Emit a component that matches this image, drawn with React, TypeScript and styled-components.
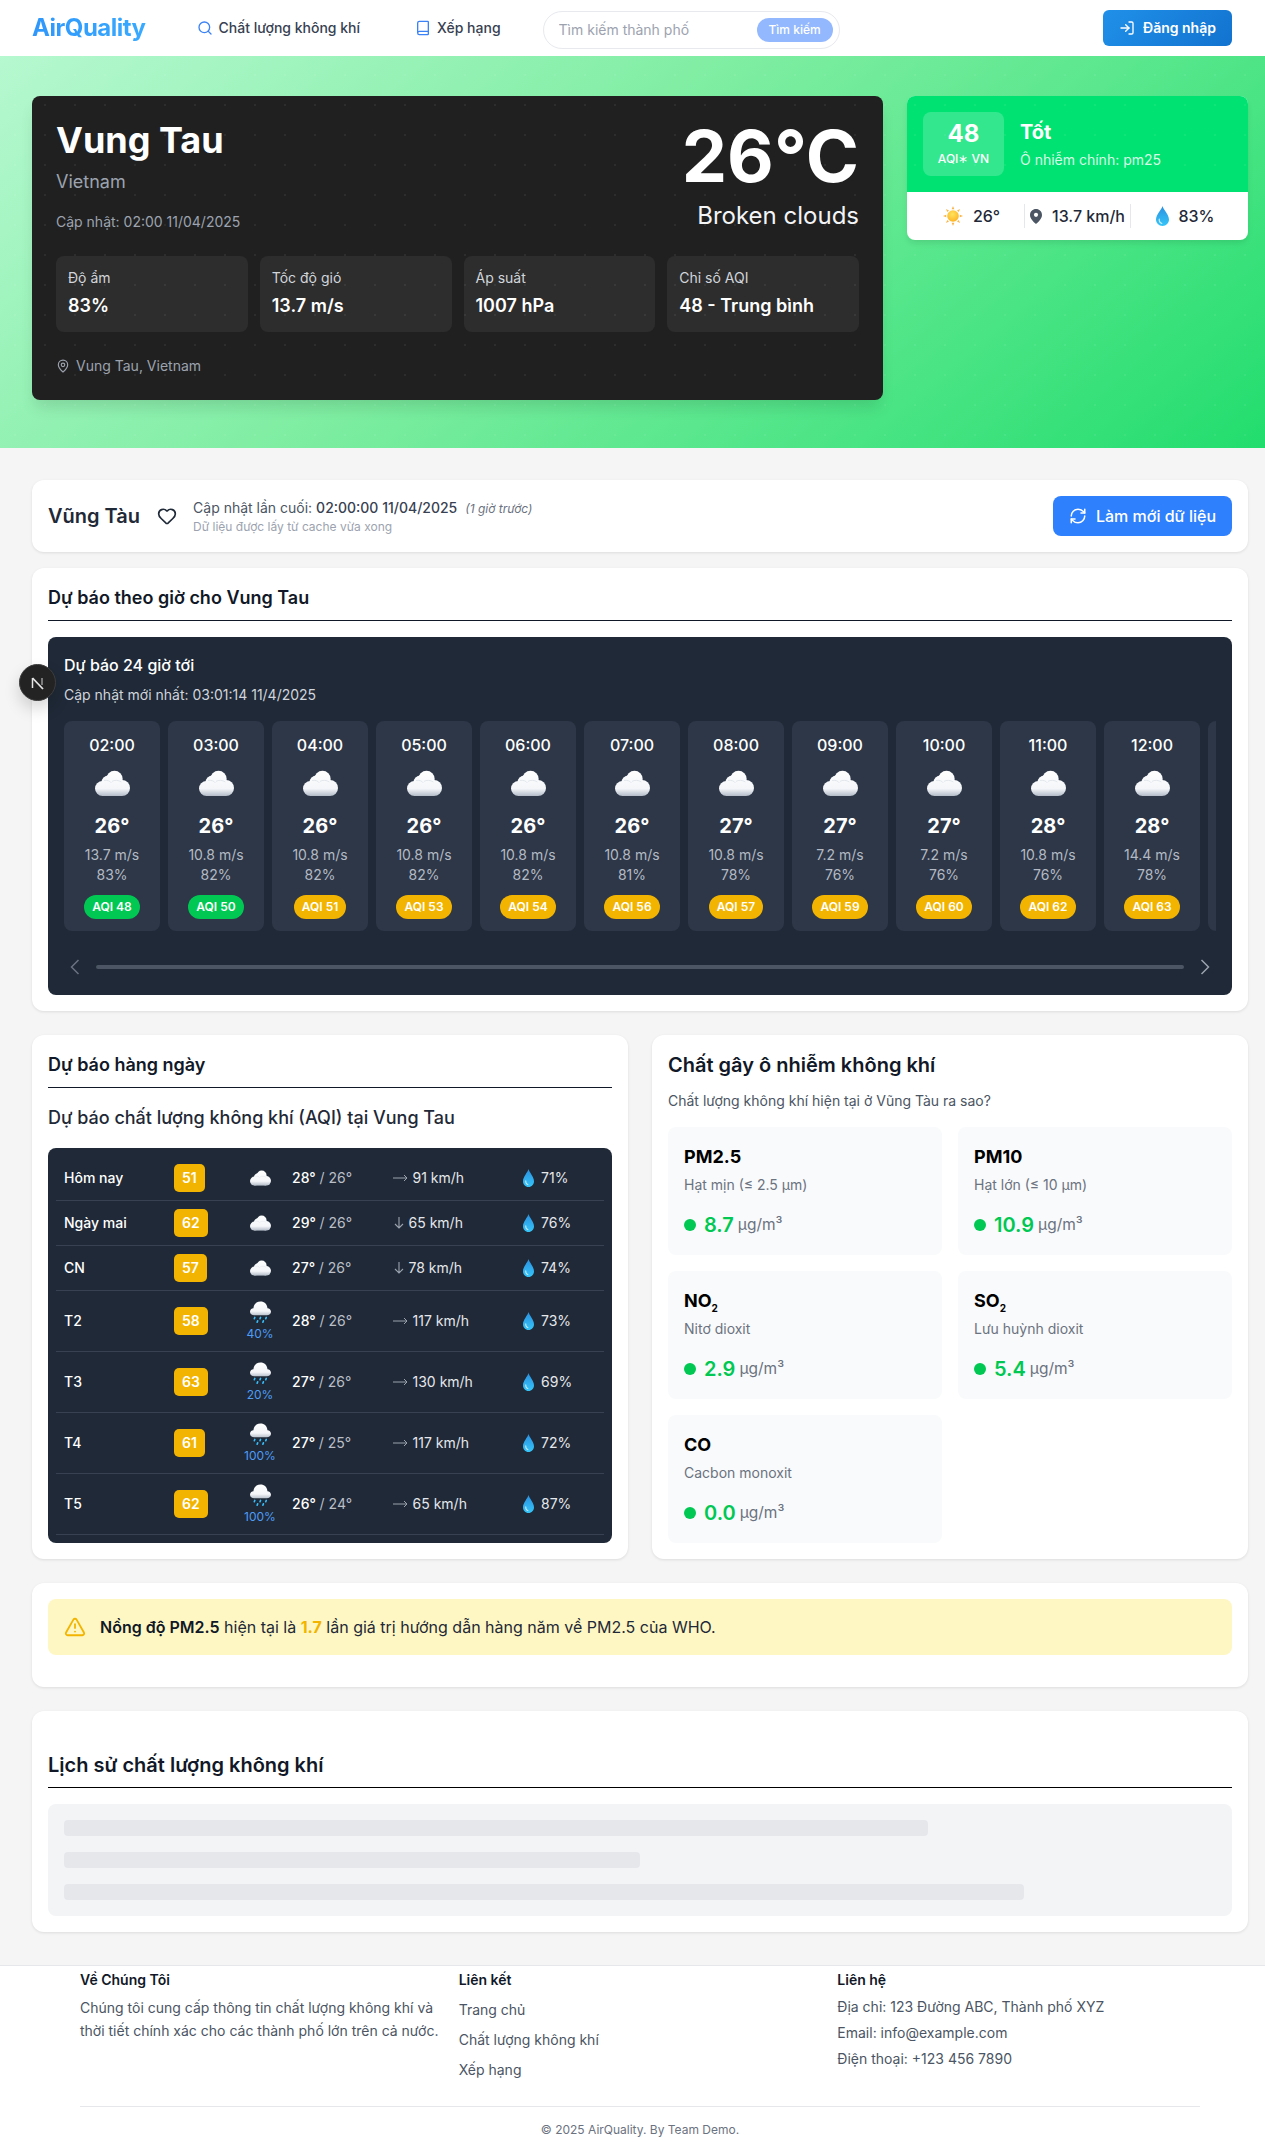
import React from "react";
import styled, { createGlobalStyle } from "styled-components";
import { Search, Book, LogIn, MapPin, Heart, RefreshCw, TriangleAlert } from "lucide-react";

const Global = createGlobalStyle`
  * { box-sizing: border-box; }
  html, body { margin: 0; padding: 0; background: #f5f5f5; }
  body { font-family: Inter, "Noto Sans", "Liberation Sans", sans-serif; color: #111827; }
  h1, h2, h3, h4, p, ul { margin: 0; padding: 0; }
`;

const Page = styled.div`
  width: 1265px;
  min-height: 2142px;
  background: #f5f5f5;
`;

/* Header */
const Header = styled.header`
  height: 56px;
  background: #fff;
  display: flex;
  align-items: center;
  padding: 0 33px 0 32px;
`;
const Logo = styled.div`
  font-size: 24px;
  font-weight: 700;
  line-height: 32px;
  letter-spacing: -0.5px;
  background: linear-gradient(90deg, #2f97fb, #38aaff);
  -webkit-background-clip: text;
  background-clip: text;
  color: transparent;
  margin-right: 51px;
`;
const NavItem = styled.a`
  display: flex;
  align-items: center;
  gap: 6px;
  font-size: 14px;
  font-weight: 500;
  line-height: 20px;
  color: #374151;
  margin-right: 55px;
  &:last-of-type { margin-right: 42px; }
  svg { color: #3b82f6; flex: none; }
`;
const SearchBox = styled.form`
  width: 297px;
  height: 38px;
  margin-top: 4px;
  border: 1.5px solid #e8e9ee;
  border-radius: 19px;
  display: flex;
  align-items: center;
  padding: 0 6px 0 15px;
`;
const SearchInput = styled.input`
  flex: 1;
  min-width: 0;
  border: 0;
  outline: 0;
  padding: 0;
  background: transparent;
  font: 400 14px/20px Inter, sans-serif;
  &::placeholder { color: #9ca3af; opacity: 1; }
`;
const SearchButton = styled.button`
  width: 76px;
  height: 24px;
  border: 0;
  border-radius: 12px;
  background: #93b8fd;
  color: #fff;
  font: 500 12px/16px Inter, sans-serif;
  padding: 0;
`;
const LoginButton = styled.button`
  margin-left: auto;
  width: 129px;
  height: 36px;
  border: 0;
  border-radius: 6px;
  background: linear-gradient(135deg, #2090e8, #1273cf);
  color: #fff;
  font: 600 14px/20px Inter, sans-serif;
  display: flex;
  align-items: center;
  justify-content: center;
  gap: 8px;
`;

/* Hero */
const Hero = styled.section`
  position: relative;
  height: 392px;
  padding: 40px 17px 48px 32px;
  display: grid;
  grid-template-columns: 851px 341px;
  column-gap: 24px;
  align-items: start;
  background: linear-gradient(140deg, #b6f8d0 0%, #7ceda0 45%, #22dd6e 100%);
  &::after {
    content: "";
    position: absolute;
    inset: 0;
    pointer-events: none;
    background-image: radial-gradient(circle, rgba(255, 255, 255, 0.06) 1px, transparent 1.2px);
    background-size: 30px 30px;
    background-position: 0 4px;
  }
`;
const WeatherCard = styled.div`
  height: 304px;
  background: #202020;
  border-radius: 8px;
  padding: 24px;
  color: #fff;
  box-shadow: 0 10px 15px -3px rgba(0, 0, 0, 0.12);
`;
const WeatherTop = styled.div`
  display: flex;
  justify-content: space-between;
`;
const City = styled.h1`
  font-size: 36px;
  line-height: 40px;
  font-weight: 700;
`;
const Country = styled.p`
  font-size: 18px;
  line-height: 28px;
  color: #9ca3af;
  margin-top: 8px;
`;
const Updated = styled.p`
  font-size: 14px;
  line-height: 20px;
  color: #9ca3af;
  margin-top: 16px;
`;
const TempBlock = styled.div`
  text-align: right;
`;
const Temp = styled.div`
  font-size: 72px;
  line-height: 72px;
  font-weight: 700;
`;
const Condition = styled.div`
  font-size: 24px;
  line-height: 32px;
  color: #f3f4f6;
  margin-top: 8px;
`;
const Stats = styled.div`
  display: grid;
  grid-template-columns: repeat(4, 1fr);
  gap: 12px;
  margin-top: 24px;
`;
const Stat = styled.div`
  height: 76px;
  background: #2d2d2d;
  border-radius: 8px;
  padding: 12px;
`;
const StatLabel = styled.div`
  font-size: 14px;
  line-height: 20px;
  color: #d1d5db;
`;
const StatValue = styled.div`
  font-size: 18px;
  line-height: 28px;
  font-weight: 600;
  margin-top: 4px;
`;
const Location = styled.div`
  display: flex;
  align-items: center;
  gap: 6px;
  font-size: 14px;
  line-height: 20px;
  color: #9ca3af;
  margin-top: 24px;
`;
const AqiCard = styled.div`
  border-radius: 8px;
  overflow: hidden;
  background: #fff;
  box-shadow: 0 4px 6px -1px rgba(0, 0, 0, 0.1);
`;
const AqiTop = styled.div`
  height: 96px;
  background: #00e272;
  padding: 16px;
  display: flex;
  gap: 16px;
  color: #fff;
`;
const AqiBadge = styled.div`
  width: 81px;
  height: 64px;
  border-radius: 8px;
  background: rgba(255, 255, 255, 0.2);
  text-align: center;
  padding-top: 7px;
`;
const AqiNumber = styled.div`
  font-size: 24px;
  line-height: 30px;
  font-weight: 700;
`;
const AqiScale = styled.div`
  font-size: 12px;
  line-height: 16px;
  font-weight: 500;
  margin-top: 2px;
`;
const AqiLevel = styled.div`
  font-size: 20px;
  line-height: 28px;
  font-weight: 700;
  margin-top: 6px;
`;
const AqiMain = styled.div`
  font-size: 14px;
  line-height: 20px;
  color: rgba(255, 255, 255, 0.85);
  margin-top: 4px;
`;
const AqiBottom = styled.div`
  height: 48px;
  display: grid;
  grid-template-columns: 117px 106px 118px;
  align-items: center;
`;
const AqiItem = styled.div<{ $offset?: string }>`
  height: 24px;
  display: flex;
  align-items: center;
  justify-content: center;
  gap: 10px;
  font-size: 16px;
  line-height: 24px;
  font-weight: 500;
  color: #1f2937;
  padding: ${(p) => p.$offset ?? "0"};
  & + & { border-left: 1px solid #e5e7eb; }
  white-space: nowrap;
`;

/* Main */
const Main = styled.main`
  padding: 32px 17px 33px 32px;
`;
const Card = styled.section<{ $mt?: number }>`
  background: #fff;
  border-radius: 12px;
  padding: 16px;
  margin-top: ${(p) => p.$mt ?? 0}px;
  box-shadow: 0 1px 3px rgba(0, 0, 0, 0.1);
`;
const StatusCard = styled(Card)`
  height: 72px;
  display: flex;
  align-items: center;
`;
const StatusCity = styled.h2`
  font-size: 20px;
  line-height: 28px;
  font-weight: 600;
  color: #1f2937;
  margin-right: 17px;
`;
const HeartIcon = styled(Heart)`
  color: #1f2937;
  margin-right: 16px;
  flex: none;
`;
const StatusLine = styled.div`
  font-size: 14px;
  line-height: 20px;
  color: #4b5563;
  strong { font-weight: 500; color: #374151; }
  em { font-size: 12px; color: #6b7280; margin-left: 8px; }
`;
const StatusNote = styled.div`
  font-size: 12px;
  line-height: 16px;
  color: #9ca3af;
`;
const RefreshButton = styled.button`
  margin-left: auto;
  width: 179px;
  height: 40px;
  border: 0;
  border-radius: 8px;
  background: #2f80fd;
  color: #fff;
  font: 500 16px/24px Inter, sans-serif;
  display: flex;
  align-items: center;
  justify-content: center;
  gap: 9px;
`;
const SectionTitle = styled.h2`
  font-size: 18px;
  line-height: 28px;
  font-weight: 600;
  color: #111827;
  padding-bottom: 8px;
  border-bottom: 1px solid #111827;
`;
const DarkPanel = styled.div`
  margin-top: 16px;
  background: #1f2937;
  border-radius: 8px;
  padding: 16px;
  color: #fff;
`;
const PanelTitle = styled.h3`
  font-size: 16px;
  line-height: 24px;
  font-weight: 500;
`;
const PanelSub = styled.p`
  font-size: 14px;
  line-height: 20px;
  color: #d1d5db;
  margin-top: 8px;
`;
const HourRow = styled.div`
  display: flex;
  gap: 8px;
  margin-top: 16px;
  overflow: hidden;
`;
const HourCard = styled.div`
  flex: none;
  width: 96px;
  height: 210px;
  background: #2d3748;
  border-radius: 8px;
  padding-top: 12px;
  display: flex;
  flex-direction: column;
  align-items: center;
`;
const HourTime = styled.div`
  font-size: 16px;
  line-height: 24px;
  font-weight: 500;
`;
const HourIcon = styled.div`
  height: 27px;
  margin-top: 13px;
`;
const HourTemp = styled.div`
  font-size: 20px;
  line-height: 28px;
  font-weight: 700;
  margin-top: 15px;
`;
const HourMeta = styled.div`
  font-size: 14px;
  line-height: 20px;
  color: #b4bac4;
`;
const HourWind = styled(HourMeta)`
  margin-top: 5px;
`;
const AqiPill = styled.div<{ $good: boolean }>`
  margin-top: 10px;
  height: 24px;
  padding: 4px 8px;
  border-radius: 12px;
  font-size: 12px;
  line-height: 16px;
  font-weight: 600;
  background: ${(p) => (p.$good ? "#00c853" : "#f2b400")};
  color: #fff;
`;
const ScrollRow = styled.div`
  display: flex;
  align-items: center;
  height: 24px;
  margin-top: 24px;
`;
const Track = styled.div`
  flex: 1;
  height: 4px;
  border-radius: 2px;
  background: #4b5563;
  margin: 0 16px;
`;
const Chevron = styled.svg<{ $side: "l" | "r" }>`
  width: 10px;
  height: 16px;
  flex: none;
  margin-left: ${(p) => (p.$side === "l" ? "6px" : "0")};
  margin-right: ${(p) => (p.$side === "r" ? "6px" : "0")};
`;
const Columns = styled.div`
  display: grid;
  grid-template-columns: 596px 596px;
  column-gap: 24px;
  margin-top: 24px;
`;
const SubTitle = styled.h3`
  font-size: 18px;
  line-height: 28px;
  font-weight: 500;
  color: #1f2937;
  margin-top: 16px;
`;
const DailyPanel = styled.div`
  margin-top: 16px;
  background: #1f2937;
  border-radius: 8px;
  padding: 8px;
  color: #fff;
`;
const DailyRow = styled.div<{ $rain: boolean }>`
  height: ${(p) => (p.$rain ? "61px" : "45px")};
  padding: 0 8px;
  border-bottom: 1px solid #374151;
  display: grid;
  grid-template-columns: 110px 60px 52px 106.5px 130.5px 1fr;
  align-items: center;
  font-size: 14px;
  line-height: 20px;
  font-weight: 500;
`;
const DayBadge = styled.span`
  display: inline-block;
  vertical-align: middle;
  padding: 4px 8px;
  height: 28px;
  line-height: 20px;
  border-radius: 5px;
  background: #f2b400;
  font-weight: 600;
  color: #fff;
`;
const WeatherCell = styled.div`
  display: flex;
  flex-direction: column;
  align-items: center;
`;
const RainPct = styled.span`
  font-size: 12px;
  line-height: 16px;
  font-weight: 400;
  color: #4f9cf5;
  margin-top: 3px;
`;
const TempCell = styled.div`
  padding-left: 6px;
  span { color: #b9bec7; font-weight: 400; }
`;
const WindCell = styled.div`
  display: flex;
  align-items: center;
  gap: 5px;
  color: #e5e7eb;
  font-weight: 400;
  white-space: nowrap;
`;
const HumidCell = styled.div`
  display: flex;
  align-items: center;
  gap: 7px;
  font-weight: 400;
  color: #e5e7eb;
`;
const PollTitle = styled.h2`
  font-size: 20px;
  line-height: 28px;
  font-weight: 600;
  color: #111827;
`;
const PollSub = styled.p`
  font-size: 14px;
  line-height: 20px;
  color: #4b5563;
  margin-top: 12px;
`;
const PollGrid = styled.div`
  display: grid;
  grid-template-columns: 1fr 1fr;
  gap: 16px;
  margin-top: 16px;
`;
const PollCard = styled.div`
  height: 128px;
  background: #f9fafb;
  border-radius: 8px;
  padding: 16px;
`;
const PollName = styled.div`
  font-size: 18px;
  line-height: 28px;
  font-weight: 700;
  color: #000;
  sub { font-size: 10px; line-height: 0; }
`;
const PollDesc = styled.div`
  font-size: 14px;
  line-height: 20px;
  color: #6b7280;
  margin-top: 4px;
`;
const PollValue = styled.div`
  display: flex;
  align-items: center;
  margin-top: 16px;
  height: 28px;
`;
const Dot = styled.span`
  width: 12px;
  height: 12px;
  border-radius: 50%;
  background: #00c853;
  margin-right: 8px;
`;
const PollNumber = styled.span`
  font-size: 20px;
  line-height: 28px;
  font-weight: 600;
  color: #00c853;
  margin-right: 4px;
`;
const PollUnit = styled.span`
  font-size: 15.5px;
  line-height: 20px;
  color: #6b7280;
`;
const Alert = styled.div`
  height: 56px;
  margin-bottom: 16px;
  background: #fef7c3;
  border-radius: 8px;
  display: flex;
  align-items: center;
  gap: 14px;
  padding: 0 16px;
  font-size: 16px;
  line-height: 24px;
  color: #1f2937;
  svg { color: #f2b400; flex: none; }
  strong { font-weight: 600; color: #111827; }
  b { font-weight: 700; color: #f2b400; }
`;
const HistoryCard = styled(Card)`
  padding-top: 40px;
`;
const HistoryTitle = styled.h2`
  font-size: 20px;
  line-height: 28px;
  font-weight: 600;
  color: #111827;
  padding-bottom: 8px;
  border-bottom: 1px solid #000;
`;
const Skeleton = styled.div`
  margin-top: 16px;
  background: #f3f4f6;
  border-radius: 8px;
  padding: 16px;
  display: flex;
  flex-direction: column;
  gap: 16px;
`;
const SkeletonBar = styled.div`
  height: 16px;
  border-radius: 4px;
  background: #e5e7eb;
`;

/* Footer */
const Footer = styled.footer`
  background: #fff;
  border-top: 1px solid #e5e7eb;
  padding: 4px 65px 4px 80px;
`;
const FooterGrid = styled.div`
  display: grid;
  grid-template-columns: repeat(3, 1fr);
  column-gap: 16px;
  height: 136px;
`;
const FooterHeading = styled.h4`
  font-size: 14px;
  line-height: 20px;
  font-weight: 600;
  color: #111827;
`;
const FooterText = styled.p`
  font-size: 14px;
  line-height: 22.75px;
  color: #4b5563;
  margin-top: 7px;
`;
const FooterLinks = styled.ul`
  list-style: none;
  margin-top: 10px;
  display: flex;
  flex-direction: column;
  gap: 10px;
  font-size: 14px;
  line-height: 20px;
  color: #4b5563;
`;
const FooterContact = styled.div`
  margin-top: 7px;
  display: flex;
  flex-direction: column;
  gap: 6px;
  font-size: 14px;
  line-height: 20px;
  color: #4b5563;
`;
const Copyright = styled.div`
  border-top: 1px solid #e5e7eb;
  padding-top: 15px;
  text-align: center;
  font-size: 12px;
  line-height: 16px;
  color: #6b7280;
`;
const DevBadge = styled.div`
  position: fixed;
  left: 19px;
  top: 664px;
  width: 37px;
  height: 37px;
  border-radius: 50%;
  background: #232323;
  border: 1px solid #3d3d3d;
  box-shadow: 0 8px 16px rgba(0, 0, 0, 0.16);
  display: flex;
  align-items: center;
  justify-content: center;
`;

/* Drawn icons */
const CloudIcon = ({ width }: { width: number }) => (
  <svg width={width} height={(width * 27) / 35} viewBox="0 0 35 27" style={{ display: "block" }}>
    <defs>
      <linearGradient id="puffFill" gradientUnits="userSpaceOnUse" x1="0" y1="0" x2="0" y2="26">
        <stop offset="0" stopColor="#ffffff" />
        <stop offset="0.72" stopColor="#f4f6f9" />
        <stop offset="1" stopColor="#b4bcc8" />
      </linearGradient>
    </defs>
    <g fill="url(#puffFill)">
      <circle cx="7.5" cy="18.5" r="7.5" />
      <circle cx="13.5" cy="12.5" r="7" />
      <circle cx="19.5" cy="9" r="8.2" />
      <circle cx="27" cy="18" r="8" />
      <rect x="7" y="12" width="20" height="14" />
    </g>
    <path d="M9 10.5C12 9.8 15 10.8 16.4 13M17 11.4C19.4 9.8 23.6 10 26.4 12" fill="none" stroke="#dde2e9" strokeWidth="0.8" />
  </svg>
);
const RainIcon = () => (
  <svg width="21" height="22" viewBox="0 0 22 23" style={{ display: "block" }}>
    <defs>
      <linearGradient id="rainFill" x1="0" y1="0" x2="0" y2="1">
        <stop offset="0" stopColor="#ffffff" />
        <stop offset="0.7" stopColor="#f3f5f8" />
        <stop offset="1" stopColor="#b9c1cc" />
      </linearGradient>
    </defs>
    <path d="M4.4 15C1.9 15 0 13.3 0 11.2C0 9.2 1.5 7.7 3.6 7.5C3.8 3.2 7 0.4 11 0.4C15 0.4 18 3.2 18.3 7.5C20.4 7.7 22 9.2 22 11.2C22 13.3 20 15 17.6 15Z" fill="url(#rainFill)" />
    <g stroke="#38bdf8" strokeWidth="1.7" strokeLinecap="round">
      <path d="M5 17.2L4.5 18.6M11 17.2L10.5 18.6M17 17.2L16.5 18.6M8 20.8L7.5 22.2M14 20.8L13.5 22.2" />
    </g>
  </svg>
);
const DropIcon = ({ w, h }: { w: number; h: number }) => (
  <svg width={w} height={h} viewBox="0 0 12 20" preserveAspectRatio="none">
    <defs>
      <linearGradient id="dropFill" x1="0" y1="0" x2="0" y2="1">
        <stop offset="0" stopColor="#2b8fe0" />
        <stop offset="1" stopColor="#35c5f8" />
      </linearGradient>
    </defs>
    <path d="M6 0C6.8 3.6 12 8.6 12 13.6C12 17.2 9.4 20 6 20C2.6 20 0 17.2 0 13.6C0 8.6 5.2 3.6 6 0Z" fill="url(#dropFill)" />
    <path d="M3 13C2.8 15 3.8 16.8 5.4 17.4" fill="none" stroke="#fff" strokeOpacity="0.75" strokeWidth="1.1" strokeLinecap="round" />
  </svg>
);
const SunIcon = () => (
  <svg width="20" height="20" viewBox="0 0 20 20">
    <defs>
      <radialGradient id="sunFill" cx="0.45" cy="0.35" r="0.7">
        <stop offset="0" stopColor="#ffe45c" />
        <stop offset="1" stopColor="#fdb022" />
      </radialGradient>
    </defs>
    <g fill="#f9b44a">
      <path d="M10 0L11.3 3.2H8.7Z" />
      <path d="M10 20L8.7 16.8H11.3Z" />
      <path d="M0 10L3.2 8.7V11.3Z" />
      <path d="M20 10L16.8 11.3V8.7Z" />
      <path d="M2.9 2.9L6 4.4L4.4 6Z" />
      <path d="M17.1 2.9L15.6 6L14 4.4Z" />
      <path d="M2.9 17.1L4.4 14L6 15.6Z" />
      <path d="M17.1 17.1L14 15.6L15.6 14Z" />
    </g>
    <circle cx="10" cy="10" r="5.8" fill="url(#sunFill)" />
  </svg>
);
const PinIcon = () => (
  <svg width="12" height="15" viewBox="0 0 12 15">
    <path d="M6 0C2.7 0 0 2.6 0 5.9C0 9.6 4 13.2 6 15C8 13.2 12 9.6 12 5.9C12 2.6 9.3 0 6 0Z" fill="#4b5563" />
    <circle cx="6" cy="5.8" r="2.1" fill="#fff" />
  </svg>
);
const WindEast = () => (
  <svg width="15" height="8" viewBox="0 0 15 8" aria-label="→">
    <path d="M0 4H14M11 1L14 4L11 7" fill="none" stroke="#9ca3af" strokeWidth="1" />
  </svg>
);
const WindSouth = () => (
  <svg width="10" height="12" viewBox="0 0 10 12" aria-label="↓" style={{ marginLeft: 1 }}>
    <path d="M5 0V11M1 7L5 11L9 7" fill="none" stroke="#9ca3af" strokeWidth="1.1" />
  </svg>
);

type Hour = { t: string; temp: number; wind: string; hum: number; aqi: number };
const hours: Hour[] = [
  { t: "02:00", temp: 26, wind: "13.7", hum: 83, aqi: 48 },
  { t: "03:00", temp: 26, wind: "10.8", hum: 82, aqi: 50 },
  { t: "04:00", temp: 26, wind: "10.8", hum: 82, aqi: 51 },
  { t: "05:00", temp: 26, wind: "10.8", hum: 82, aqi: 53 },
  { t: "06:00", temp: 26, wind: "10.8", hum: 82, aqi: 54 },
  { t: "07:00", temp: 26, wind: "10.8", hum: 81, aqi: 56 },
  { t: "08:00", temp: 27, wind: "10.8", hum: 78, aqi: 57 },
  { t: "09:00", temp: 27, wind: "7.2", hum: 76, aqi: 59 },
  { t: "10:00", temp: 27, wind: "7.2", hum: 76, aqi: 60 },
  { t: "11:00", temp: 28, wind: "10.8", hum: 76, aqi: 62 },
  { t: "12:00", temp: 28, wind: "14.4", hum: 78, aqi: 63 },
];

type Day = { d: string; aqi: number; rain?: string; hi: number; lo: number; south?: boolean; wind: string; hum: number };
const days: Day[] = [
  { d: "Hôm nay", aqi: 51, hi: 28, lo: 26, wind: "91", hum: 71 },
  { d: "Ngày mai", aqi: 62, hi: 29, lo: 26, south: true, wind: "65", hum: 76 },
  { d: "CN", aqi: 57, hi: 27, lo: 26, south: true, wind: "78", hum: 74 },
  { d: "T2", aqi: 58, rain: "40%", hi: 28, lo: 26, wind: "117", hum: 73 },
  { d: "T3", aqi: 63, rain: "20%", hi: 27, lo: 26, wind: "130", hum: 69 },
  { d: "T4", aqi: 61, rain: "100%", hi: 27, lo: 25, wind: "117", hum: 72 },
  { d: "T5", aqi: 62, rain: "100%", hi: 26, lo: 24, wind: "65", hum: 87 },
];

const pollutants: { name: React.ReactNode; desc: string; value: string }[] = [
  { name: "PM2.5", desc: "Hạt mịn (≤ 2.5 µm)", value: "8.7" },
  { name: "PM10", desc: "Hạt lớn (≤ 10 µm)", value: "10.9" },
  { name: <>NO<sub>2</sub></>, desc: "Nitơ dioxit", value: "2.9" },
  { name: <>SO<sub>2</sub></>, desc: "Lưu huỳnh dioxit", value: "5.4" },
  { name: "CO", desc: "Cacbon monoxit", value: "0.0" },
];

export default function App() {
  return (
    <Page>
      <Global />
      <Header>
        <Logo>AirQuality</Logo>
        <NavItem><Search size={16} />Chất lượng không khí</NavItem>
        <NavItem><Book size={16} />Xếp hạng</NavItem>
        <SearchBox>
          <SearchInput placeholder="Tìm kiếm thành phố" readOnly />
          <SearchButton type="button">Tìm kiếm</SearchButton>
        </SearchBox>
        <LoginButton type="button"><LogIn size={16} />Đăng nhập</LoginButton>
      </Header>

      <Hero>
        <WeatherCard>
          <WeatherTop>
            <div>
              <City>Vung Tau</City>
              <Country>Vietnam</Country>
              <Updated>Cập nhật: 02:00 11/04/2025</Updated>
            </div>
            <TempBlock>
              <Temp>26°C</Temp>
              <Condition>Broken clouds</Condition>
            </TempBlock>
          </WeatherTop>
          <Stats>
            <Stat><StatLabel>Độ ẩm</StatLabel><StatValue>83%</StatValue></Stat>
            <Stat><StatLabel>Tốc độ gió</StatLabel><StatValue>13.7 m/s</StatValue></Stat>
            <Stat><StatLabel>Áp suất</StatLabel><StatValue>1007 hPa</StatValue></Stat>
            <Stat><StatLabel>Chỉ số AQI</StatLabel><StatValue>48 - Trung bình</StatValue></Stat>
          </Stats>
          <Location><MapPin size={14} />Vung Tau, Vietnam</Location>
        </WeatherCard>
        <AqiCard>
          <AqiTop>
            <AqiBadge>
              <AqiNumber>48</AqiNumber>
              <AqiScale>AQI∗ VN</AqiScale>
            </AqiBadge>
            <div>
              <AqiLevel>Tốt</AqiLevel>
              <AqiMain>Ô nhiễm chính: pm25</AqiMain>
            </div>
          </AqiTop>
          <AqiBottom>
            <AqiItem $offset="0 0 0 12px"><SunIcon />26°</AqiItem>
            <AqiItem><PinIcon />13.7 km/h</AqiItem>
            <AqiItem $offset="0 9px 0 0"><DropIcon w={13} h={20} />83%</AqiItem>
          </AqiBottom>
        </AqiCard>
      </Hero>

      <Main>
        <StatusCard>
          <StatusCity>Vũng Tàu</StatusCity>
          <HeartIcon size={20} />
          <div>
            <StatusLine>Cập nhật lần cuối: <strong>02:00:00 11/04/2025</strong><em>(1 giờ trước)</em></StatusLine>
            <StatusNote>Dữ liệu được lấy từ cache vừa xong</StatusNote>
          </div>
          <RefreshButton type="button"><RefreshCw size={18} />Làm mới dữ liệu</RefreshButton>
        </StatusCard>

        <Card $mt={16}>
          <SectionTitle>Dự báo theo giờ cho Vung Tau</SectionTitle>
          <DarkPanel>
            <PanelTitle>Dự báo 24 giờ tới</PanelTitle>
            <PanelSub>Cập nhật mới nhất: 03:01:14 11/4/2025</PanelSub>
            <HourRow>
              {hours.map((h) => (
                <HourCard key={h.t}>
                  <HourTime>{h.t}</HourTime>
                  <HourIcon><CloudIcon width={35} /></HourIcon>
                  <HourTemp>{h.temp}°</HourTemp>
                  <HourWind>{h.wind} m/s</HourWind>
                  <HourMeta>{h.hum}%</HourMeta>
                  <AqiPill $good={h.aqi <= 50}>AQI {h.aqi}</AqiPill>
                </HourCard>
              ))}
              <HourCard aria-hidden="true" />
            </HourRow>
            <ScrollRow>
              <Chevron $side="l" viewBox="0 0 10 16"><path d="M8.5 1L1.5 8L8.5 15" fill="none" stroke="#6b7280" strokeWidth="1.5" /></Chevron>
              <Track />
              <Chevron $side="r" viewBox="0 0 10 16"><path d="M1.5 1L8.5 8L1.5 15" fill="none" stroke="#9ca3af" strokeWidth="1.5" /></Chevron>
            </ScrollRow>
          </DarkPanel>
        </Card>

        <Columns>
          <Card>
            <SectionTitle>Dự báo hàng ngày</SectionTitle>
            <SubTitle>Dự báo chất lượng không khí (AQI) tại Vung Tau</SubTitle>
            <DailyPanel>
              {days.map((d) => (
                <DailyRow key={d.d} $rain={!!d.rain}>
                  <div>{d.d}</div>
                  <div><DayBadge>{d.aqi}</DayBadge></div>
                  <WeatherCell>
                    {d.rain ? <RainIcon /> : <CloudIcon width={21} />}
                    {d.rain && <RainPct>{d.rain}</RainPct>}
                  </WeatherCell>
                  <TempCell>{d.hi}° <span>/ {d.lo}°</span></TempCell>
                  <WindCell>{d.south ? <WindSouth /> : <WindEast />}{d.wind} km/h</WindCell>
                  <HumidCell><DropIcon w={11} h={18} />{d.hum}%</HumidCell>
                </DailyRow>
              ))}
            </DailyPanel>
          </Card>
          <Card>
            <PollTitle>Chất gây ô nhiễm không khí</PollTitle>
            <PollSub>Chất lượng không khí hiện tại ở Vũng Tàu ra sao?</PollSub>
            <PollGrid>
              {pollutants.map((p) => (
                <PollCard key={p.desc}>
                  <PollName>{p.name}</PollName>
                  <PollDesc>{p.desc}</PollDesc>
                  <PollValue>
                    <Dot />
                    <PollNumber>{p.value}</PollNumber>
                    <PollUnit>µg/m³</PollUnit>
                  </PollValue>
                </PollCard>
              ))}
            </PollGrid>
          </Card>
        </Columns>

        <Card $mt={24}>
          <Alert>
            <TriangleAlert size={22} />
            <span><strong>Nồng độ PM2.5</strong> hiện tại là <b>1.7</b> lần giá trị hướng dẫn hàng năm về PM2.5 của WHO.</span>
          </Alert>
        </Card>

        <HistoryCard $mt={24}>
          <HistoryTitle>Lịch sử chất lượng không khí</HistoryTitle>
          <Skeleton>
            <SkeletonBar style={{ width: "75%" }} />
            <SkeletonBar style={{ width: "50%" }} />
            <SkeletonBar style={{ width: "83.33%" }} />
          </Skeleton>
        </HistoryCard>
      </Main>

      <Footer>
        <FooterGrid>
          <div>
            <FooterHeading>Về Chúng Tôi</FooterHeading>
            <FooterText>Chúng tôi cung cấp thông tin chất lượng không khí và thời tiết chính xác cho các thành phố lớn trên cả nước.</FooterText>
          </div>
          <div>
            <FooterHeading>Liên kết</FooterHeading>
            <FooterLinks>
              <li>Trang chủ</li>
              <li>Chất lượng không khí</li>
              <li>Xếp hạng</li>
            </FooterLinks>
          </div>
          <div>
            <FooterHeading>Liên hệ</FooterHeading>
            <FooterContact>
              <div>Địa chỉ: 123 Đường ABC, Thành phố XYZ</div>
              <div>Email: info@example.com</div>
              <div>Điện thoại: +123 456 7890</div>
            </FooterContact>
          </div>
        </FooterGrid>
        <Copyright>© 2025 AirQuality. By Team Demo.</Copyright>
      </Footer>

      <DevBadge>
        <svg width="16" height="16" viewBox="0 0 16 16">
          <path d="M2.5 3V13" stroke="#e5e5e5" strokeWidth="1.5" fill="none" />
          <path d="M2.5 3L13 14" stroke="#e5e5e5" strokeWidth="1.8" fill="none" />
          <path d="M12 3V10" stroke="#9a9a9a" strokeWidth="1.5" fill="none" />
        </svg>
      </DevBadge>
    </Page>
  );
}
